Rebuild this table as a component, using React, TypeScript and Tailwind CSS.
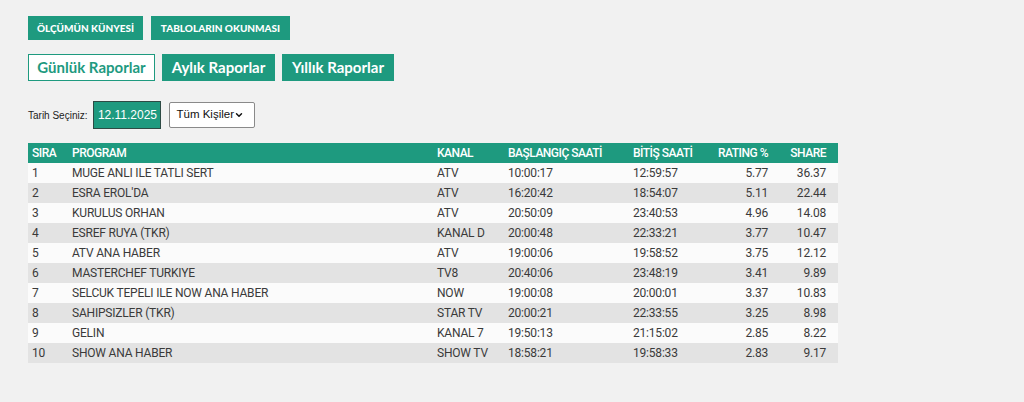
import { ChevronDown } from "lucide-react";

const rows = [
	["1", "MUGE ANLI ILE TATLI SERT", "ATV", "10:00:17", "12:59:57", "5.77", "36.37"],
	["2", "ESRA EROL'DA", "ATV", "16:20:42", "18:54:07", "5.11", "22.44"],
	["3", "KURULUS ORHAN", "ATV", "20:50:09", "23:40:53", "4.96", "14.08"],
	["4", "ESREF RUYA (TKR)", "KANAL D", "20:00:48", "22:33:21", "3.77", "10.47"],
	["5", "ATV ANA HABER", "ATV", "19:00:06", "19:58:52", "3.75", "12.12"],
	["6", "MASTERCHEF TURKIYE", "TV8", "20:40:06", "23:48:19", "3.41", "9.89"],
	["7", "SELCUK TEPELI ILE NOW ANA HABER", "NOW", "19:00:08", "20:00:01", "3.37", "10.83"],
	["8", "SAHIPSIZLER (TKR)", "STAR TV", "20:00:21", "22:33:55", "3.25", "8.98"],
	["9", "GELIN", "KANAL 7", "19:50:13", "21:15:02", "2.85", "8.22"],
	["10", "SHOW ANA HABER", "SHOW TV", "18:58:21", "19:58:33", "2.83", "9.17"],
];

export default function App() {
	return (
		<div className="min-h-[402px] w-full bg-[#f1f1f1] px-7 pt-4">
			<div className="flex gap-2 font-['Lato',sans-serif] text-[10px] font-black text-white">
				<button className="h-6 w-[115px] bg-[#1e9a7f]">ÖLÇÜMÜN KÜNYESİ</button>
				<button className="h-6 w-[139px] bg-[#1e9a7f]">TABLOLARIN OKUNMASI</button>
			</div>

			<div className="mt-3.5 flex gap-[7px] font-['Lato',sans-serif] text-[15px] font-bold">
				<button className="h-[27px] w-[127px] border border-[#1e9a7f] bg-white text-[#1e9a7f]">
					Günlük Raporlar
				</button>
				<button className="h-[27px] w-[113px] bg-[#1e9a7f] text-white">Aylık Raporlar</button>
				<button className="h-[27px] w-[112px] bg-[#1e9a7f] text-white">Yıllık Raporlar</button>
			</div>

			<div className="mt-5 flex items-center whitespace-nowrap font-['Liberation_Sans',sans-serif]">
				<span className="text-[10px] text-[#222]">Tarih Seçiniz:</span>
				<div className="ml-[6px] flex h-7 w-[68px] items-center justify-center border border-[#2d4a44] bg-[#1e9a7f] text-[12px] text-white">
					12.11.2025
				</div>
				<div className="ml-2 flex h-[26px] w-[86px] items-center justify-between rounded-[2px] border border-[#8a8a8a] bg-white pl-[6px] pr-[10px] text-[11.5px] text-[#111]">
					<span>Tüm Kişiler</span>
					<ChevronDown className="h-2.5 w-2.5" strokeWidth={3.5} />
				</div>
			</div>

			<table className="mt-3.5 w-[810px] table-fixed border-collapse font-['Roboto',sans-serif] text-[12px] tracking-[-0.2px] text-[#3a3a3a]">
				<colgroup>
					<col className="w-[40px]" />
					<col className="w-[365px]" />
					<col className="w-[71px]" />
					<col className="w-[125px]" />
					<col className="w-[85px]" />
					<col className="w-[60px]" />
					<col className="w-[64px]" />
				</colgroup>
				<thead>
					<tr className="h-5 bg-[#1e9a7f] text-left tracking-[-0.5px] text-white">
						<th className="pl-1 font-medium">SIRA</th>
						<th className="pl-1 font-medium">PROGRAM</th>
						<th className="pl-1 font-medium">KANAL</th>
						<th className="pl-1 font-medium">BAŞLANGIÇ SAATİ</th>
						<th className="pl-1 font-medium">BİTİŞ SAATİ</th>
						<th className="pr-1.5 text-right font-medium">RATING %</th>
						<th className="pr-3 text-right font-medium">SHARE</th>
					</tr>
				</thead>
				<tbody>
					{rows.map((r, i) => (
						<tr key={r[0]} className={`h-5 ${i % 2 === 0 ? "bg-[#fbfbfb]" : "bg-[#e3e3e3]"}`}>
							<td className="pl-1">{r[0]}</td>
							<td className="pl-1">{r[1]}</td>
							<td className="pl-1">{r[2]}</td>
							<td className="pl-1">{r[3]}</td>
							<td className="pl-1">{r[4]}</td>
							<td className="pr-1.5 text-right">{r[5]}</td>
							<td className="pr-3 text-right">{r[6]}</td>
						</tr>
					))}
				</tbody>
			</table>
		</div>
	);
}
